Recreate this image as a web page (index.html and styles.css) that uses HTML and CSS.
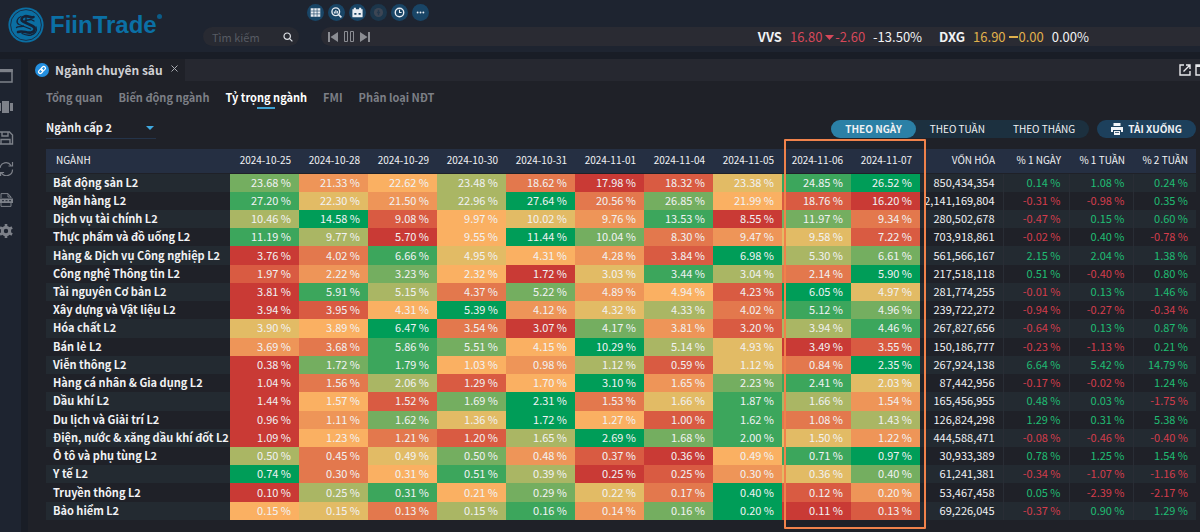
FILE: index.html
```html
<!DOCTYPE html>
<html lang="vi">
<head>
<meta charset="utf-8">
<title>FiinTrade - Ngành chuyên sâu</title>
<link rel="stylesheet" href="styles.css">
</head>
<body>
<header class="topbar">
  <a class="brand" href="#" aria-label="FiinTrade">
    <svg class="brand-mark" viewBox="0 0 36 36" aria-hidden="true">
      <circle cx="18" cy="18" r="17.6" fill="#0b6fa3"/>
      <circle cx="18" cy="18" r="15.4" fill="none" stroke="#17304a" stroke-width="1"/>
      <g fill="none" stroke="#152338" stroke-linecap="round" stroke-linejoin="round">
        <path stroke-width="2.600" d="M25.500 10c-2.500 1.500-5-1.500-8.500-.8-3.500.8-4.500 3.800-2 5.300l9.500 4.500c3.500 2 2.500 5.500-1.500 6.500-4.500 1-8-2.500-13-.5"/>
        <path stroke-width="1.300" d="M13 9.500c-4 1.500-5.500 6-2 8l11.500 4.500M18 10v6M17 13.500l6-1 3 1.500M8.500 20.500c2-2 5 0 7-1.500M28 20c1.500 4-1 7-5 8-4 .8-7-.5-9-1.500"/>
      </g>
    </svg>
    <span class="brand-name">FiinTrade</span><span class="brand-dot"></span>
  </a>
  <form class="search" role="search">
    <input class="search-input" type="text" placeholder="Tìm kiếm" aria-label="Tìm kiếm">
    <button class="bare" type="button" aria-label="Tìm">
      <svg width="10" height="10" viewBox="0 0 10 10" fill="none" stroke="#dde0e5" stroke-width="1.2"><circle cx="4.2" cy="4.2" r="3.2"/><path d="M6.6 6.6 9.4 9.4"/></svg>
    </button>
  </form>
  <div class="top-main">
    <nav class="tools" aria-label="Công cụ">
      <button class="tool" type="button" aria-label="Bảng giá"><svg viewBox="0 0 16 16"><path fill="#e9edf3" d="M3.500 4h9v8h-9z"/><path stroke="#1b4363" stroke-width=".6" d="M3.500 6.600h9M3.500 9.300h9M6.500 4v8M9.500 4v8"/></svg></button>
      <button class="tool" type="button" aria-label="Tìm mã"><svg viewBox="0 0 16 16" fill="none" stroke="#e9edf3"><circle cx="7.300" cy="7.300" r="3.600" stroke-width="1.300"/><path stroke-width="1.500" d="m10 10 2.600 2.600"/><path stroke-width="1" d="M6 9V7M7.400 9V5.600M8.800 9V6.500"/></svg></button>
      <button class="tool" type="button" aria-label="Lịch"><svg viewBox="0 0 16 16"><path fill="#e9edf3" d="M4.500 3.500h2v1.500h3V3.500h2V5h1.300v7.500H3.200V5h1.300z"/><path fill="#1b4363" d="M5 8.500h2v1.500H5zM9 8.500h2v1.500H9z"/></svg></button>
      <button class="tool tool-off" type="button" aria-label="Thông tin"><svg viewBox="0 0 16 16"><circle cx="8" cy="8" r="4.300" fill="#3d4654"/><path stroke="#24384c" stroke-width="1.300" d="M8 5.500v5M6.500 8h3"/></svg></button>
      <button class="tool" type="button" aria-label="Thời gian"><svg viewBox="0 0 16 16" fill="none" stroke="#e9edf3" stroke-width="1.300"><circle cx="8" cy="8" r="4"/><path stroke-width="1" d="M8 5.500V8h2"/></svg></button>
      <button class="tool" type="button" aria-label="Thêm"><svg viewBox="0 0 16 16" fill="#e9edf3"><circle cx="5.300" cy="8" r=".9"/><circle cx="8" cy="8" r=".9"/><circle cx="10.700" cy="8" r=".9"/></svg></button>
    </nav>
    <div class="ticker">
      <div class="player">
        <button class="bare" type="button" aria-label="Trước"><svg width="10" height="10" viewBox="0 0 10 10" fill="#8b8d93"><path d="M0 0h2v10H0zM10 0v10L2.500 5z"/></svg></button>
        <button class="bare" type="button" aria-label="Tạm dừng"><svg width="10" height="11" viewBox="0 0 10 11" fill="none" stroke="#8b8d93"><path d="M.5.5h3v10h-3zM6.500.5h3v10h-3z"/></svg></button>
        <button class="bare" type="button" aria-label="Sau"><svg width="10" height="10" viewBox="0 0 10 10" fill="#8b8d93"><path d="M8 0h2v10H8zM0 0v10l7.500-5z"/></svg></button>
      </div>
      <div class="quotes">
        <div class="quote"><b>VVS</b><span class="q-down">16.80 <svg width="9" height="5" viewBox="0 0 9 5" aria-hidden="true"><path fill="currentColor" d="M0 0h9L4.500 5z"/></svg>-2.60</span><span>-13.50%</span></div>
        <div class="quote"><b>DXG</b><span class="q-flat">16.90 <svg width="9" height="9" viewBox="0 0 9 9" aria-hidden="true"><path fill="currentColor" d="M0 5h9v2H0z"/></svg>0.00</span><span>0.00%</span></div>
      </div>
    </div>
  </div>
</header>
<div class="shell">
  <aside class="sidebar">
    <button class="bare" type="button" aria-label="Cửa sổ"><svg width="14" height="14" viewBox="0 0 14 14"><path fill="none" stroke="#7d8189" stroke-width="1.500" d="M0 1h12v12H0"/><path fill="#7d8189" d="M0 0h12.700v3.200H0z"/></svg></button>
    <button class="bare" type="button" aria-label="Bố cục"><svg width="14" height="14" viewBox="0 0 14 14" fill="#7d8189"><path d="M2 1h7v12H2zM0 3h1v8H0zM10 3h3v8h-3z"/></svg></button>
    <button class="bare" type="button" aria-label="Lưu"><svg width="14" height="14" viewBox="0 0 14 14" fill="none" stroke="#7d8189" stroke-width="1.400"><path d="M0 1h9.500L12.500 4v9H0M2 1v4h6V1M1 13V8.500h9V13"/></svg></button>
    <button class="bare" type="button" aria-label="Làm mới"><svg width="14" height="14" viewBox="0 0 14 14" fill="none" stroke="#7d8189" stroke-width="1.200"><path d="M0 6a6 6 0 0 1 11-2.500M12.500 0v4h-4M12.500 7.500A6 6 0 0 1 1.500 11M.6 14v-3.500h3.500"/></svg></button>
    <button class="bare" type="button" aria-label="Xuất tệp"><svg width="14" height="14" viewBox="0 0 14 14"><path fill="none" stroke="#7d8189" d="M1 5V.6h7L11 4v1M1 10v3.400h10V10M8 .6V4h3"/><path fill="#7d8189" d="M0 5.500h13v4.500H0z"/><path stroke="#1f2530" d="M2 7.700h2M5.500 7.700h2M9 7.700h2"/></svg></button>
    <button class="bare" type="button" aria-label="Cài đặt"><svg width="14" height="14" viewBox="0 0 14 14"><circle cx="6" cy="7" r="3.700" fill="none" stroke="#7d8189" stroke-width="3"/><path stroke="#7d8189" stroke-width="2.600" d="M6 0v3M6 11v3M0 3.500l2.600 1.500M9.400 9l2.700 1.500M0 10.500 2.600 9M9.400 5l2.700-1.500"/></svg></button>
  </aside>
  <main class="workspace">
    <div class="tabbar">
      <div class="tab">
        <svg width="14" height="14" viewBox="0 0 14 14" aria-hidden="true"><circle cx="7" cy="7" r="7" fill="#2490e0"/><g fill="none" stroke="#fff" stroke-width="1.200" transform="rotate(-45 7 7)"><rect x="2.800" y="5.300" width="4.800" height="3.400" rx="1.700"/><rect x="6.400" y="5.300" width="4.800" height="3.400" rx="1.700"/></g></svg>
        <span>Ngành chuyên sâu</span>
        <button class="bare tab-close" type="button" aria-label="Đóng"><svg width="7" height="7" viewBox="0 0 7 7" stroke="#a9acb2"><path d="m.5.5 6 6M6.500.5l-6 6"/></svg></button>
      </div>
      <div class="tabbar-rest">
        <button class="bare" type="button" aria-label="Mở rộng"><svg width="12" height="12" viewBox="0 0 12 12" fill="none" stroke="#e8e9ec" stroke-width="1.400"><path d="M5 1H1v10h10V7M7 1h4v4M11 1 4.500 7.500"/></svg></button>
        <button class="bare clipped" type="button" aria-label="Phóng to"><svg width="12" height="12" viewBox="0 0 12 12" fill="none" stroke="#e8e9ec"><path stroke-width="1.400" d="M1 1h10v10H1z"/><path stroke-width="2" d="M1 2h10"/></svg></button>
      </div>
    </div>
    <nav class="subnav">
      <a href="#">Tổng quan</a>
      <a href="#">Biến động ngành</a>
      <a href="#" class="active" aria-current="page">Tỷ trọng ngành</a>
      <a href="#">FMI</a>
      <a href="#">Phân loại NĐT</a>
    </nav>
    <div class="filters">
      <div class="level">
        <select class="level-select" aria-label="Cấp ngành"><option>Ngành cấp 2</option></select>
      </div>
      <div class="actions">
        <div class="period">
          <button class="pill on" type="button">THEO NGÀY</button>
          <button class="pill" type="button">THEO TUẦN</button>
          <button class="pill" type="button">THEO THÁNG</button>
        </div>
        <button class="download" type="button">
          <svg width="12" height="12" viewBox="0 0 12 12" aria-hidden="true"><path fill="#f2f4f7" d="M2.500 0h7v3h-7zM0 4h12v5h-2V7H2v2H0zM3 8h6v4H3z"/><path stroke="#1e3f5b" stroke-width=".8" d="M4 9.500h4"/></svg>
          TẢI XUỐNG
        </button>
      </div>
    </div>
    <div class="table-area">
      <table class="grid">
        <colgroup>
          <col><col class="c-day" span="10"><col class="c-cap"><col class="c-d1"><col class="c-w1"><col class="c-w2">
        </colgroup>
        <thead><tr id="head"></tr></thead>
        <tbody id="rows"></tbody>
      </table>
      <div class="highlight"></div>
    </div>
  </main>
</div>
<script src="table.js"></script>
</body>
</html>
```
FILE: styles.css
```css
* { box-sizing: border-box; }

body {
  margin: 0;
  height: 100vh;
  min-height: 500px;
  display: flex;
  flex-direction: column;
  gap: 7px;
  overflow-x: hidden;
  background: #191d26;
  color: #f1f2f4;
  font-family: "Noto Sans CJK SC", "Noto Sans", sans-serif;
  font-size: 11px;
  line-height: 16px;
}

button, input, select { font: inherit; color: inherit; }
a { color: inherit; text-decoration: none; }
svg { display: block; flex: none; }

.bare {
  padding: 0;
  border: 0;
  background: none;
  display: flex;
}

.topbar {
  display: flex;
  align-items: flex-end;
  flex: none;
  height: 52px;
  padding: 0 0 6px 8px;
  background: #1e2430;
}

.brand {
  display: flex;
  align-self: flex-start;
  width: 195px;
  padding-top: 7px;
  align-items: center;
  color: #0b70a5;
}
.brand-mark { width: 36px; height: 36px; margin-right: 6px; }
.brand-name {
  font: bold 24px/36px "Liberation Sans", Arial, sans-serif;
}
.brand-dot {
  width: 5px;
  height: 5px;
  border-radius: 50%;
  background: #0b5c88;
  align-self: flex-start;
  margin-top: 7px;
}

.search {
  display: flex;
  align-items: center;
  width: 96px;
  height: 19px;
  padding: 0 6px 0 9px;
  border-radius: 10px;
  background: #282a32;
}
.search-input {
  flex: 1;
  min-width: 0;
  padding: 0;
  border: 0;
  outline: 0;
  background: none;
}
.search-input::placeholder { color: #575b63; opacity: 1; }

.top-main {
  flex: 1;
  display: flex;
  flex-direction: column;
  gap: 6px;
  padding-left: 8px;
}
.tools { display: flex; gap: 4px; }
.tool {
  width: 17px;
  height: 17px;
  padding: 0;
  border: 0;
  border-radius: 50%;
  background: #194566;
}
.tool-off { background: #1c364b; }
.ticker {
  display: flex;
  justify-content: space-between;
  align-items: center;
  height: 19px;
  margin-left: 14px;
  padding: 0 111px 0 7px;
  border-radius: 10px 0 0 10px;
  background: #2a2b33;
}
.player { display: flex; gap: 6px; align-items: center; }
.quotes { display: flex; gap: 17px; font-size: 13px; }
.quote { display: flex; gap: 8px; }
.quote svg { display: inline-block; vertical-align: 2px; margin-right: 1px; }
.q-down { color: #d6485a; }
.q-flat { color: #e0b14c; }

.shell { flex: 1; display: flex; gap: 7px; min-height: 0; }
.sidebar {
  flex: none;
  width: 21px;
  padding-top: 10px;
  display: flex;
  flex-direction: column;
  gap: 17px;
  background: #1e2430;
}

.workspace {
  flex: 1;
  min-width: 0;
  display: flex;
  flex-direction: column;
  background: #1f2128;
}
.tabbar { display: flex; height: 22px; }
.tab {
  display: flex;
  align-items: center;
  gap: 6px;
  width: 157px;
  padding-left: 7px;
  font-size: 12px;
  font-weight: 700;
  color: #cfd0d4;
}
.tab span { flex: none; }
.tab-close { align-self: flex-start; margin: 6px 0 0 2px; }
.tabbar-rest {
  flex: 1;
  display: flex;
  justify-content: flex-end;
  align-items: center;
  gap: 4px;
  overflow: hidden;
  background: #262830;
}
.clipped { width: 5px; overflow: hidden; }

.subnav {
  display: flex;
  gap: 16px;
  padding: 8px 0 0 18px;
  color: #7c7f86;
  font-weight: 700;
}
.subnav a { position: relative; height: 20px; }
.subnav .active { color: #fff; }
.subnav .active::after {
  content: "";
  position: absolute;
  left: 50%;
  bottom: 0;
  width: 18px;
  height: 2px;
  margin-left: -9px;
  background: #3fa0d0;
}

.filters {
  display: flex;
  justify-content: space-between;
  align-items: flex-start;
  height: 31px;
  margin: 9px 4px 0 18px;
}
.level {
  position: relative;
  width: 110px;
  border-bottom: 1px solid #24344a;
}
.level::after {
  content: "";
  position: absolute;
  right: 2px;
  top: 8px;
  border: 4px solid transparent;
  border-top-color: #3fa9e0;
  pointer-events: none;
}
.level-select {
  appearance: none;
  display: block;
  width: 100%;
  height: 20px;
  padding: 0 0 3px;
  border: 0;
  background: none;
  font-weight: 700;
}
.actions { display: flex; gap: 8px; padding-top: 2px; font-size: 10px; }
.period { display: flex; border-radius: 9px; background: #1c303f; }
.pill {
  height: 18px;
  padding: 0 14px;
  border: 0;
  border-radius: 9px;
  background: none;
  line-height: 16px;
}
.pill.on { background: #2b80a6; font-weight: 700; }
.download {
  display: flex;
  align-items: center;
  gap: 5px;
  height: 18px;
  padding: 0 14px;
  border: 0;
  border-radius: 9px;
  background: #1d405c;
  font-weight: 700;
  line-height: 16px;
}

.table-area {
  position: relative;
  flex: 1;
  margin: 0 4px 12px 18px;
}
.grid {
  width: 100%;
  height: 100%;
  table-layout: fixed;
  border-collapse: collapse;
}
.c-day { width: 6%; }
.c-cap { width: 83px; }
.c-d1 { width: 66px; }
.c-w1 { width: 64px; }
.c-w2 { width: 63px; }

.grid th, .grid td { padding: 0 8px 2px; text-align: right; white-space: nowrap; }
.grid thead th {
  height: 24px;
  background: #252f42;
  border-bottom: 1px solid #1f2128;
  font-size: 10px;
  font-weight: 400;
}
.grid thead th:first-child { text-align: left; padding-left: 10px; }
.grid tbody th { text-align: left; padding: 0 0 2px 7px; font-weight: 700; }
.grid tbody tr:nth-child(odd) { background: #232a31; }
.grid .cap { direction: rtl; padding-left: 0; }
.grid .chg { border-left: 1px solid #292d35; }
.up { color: #1fbd73; }
.down { color: #d43d4c; }

.h0 { background: #c93a35; }
.h1 { background: #d95b42; }
.h2 { background: #e3784d; }
.h3 { background: #ee9558; }
.h4 { background: #fab062; }
.h5 { background: #e2bb65; }
.h6 { background: #aab664; }
.h7 { background: #74ae60; }
.h8 { background: #3ca65c; }
.h9 { background: #009d58; }

.highlight {
  position: absolute;
  top: -10px;
  bottom: -9px;
  right: 270px;
  width: 142px;
  border: 2px solid #f0824b;
  border-radius: 1px;
  pointer-events: none;
}
```
FILE: table.js
```javascript
const headings = [
  "NGÀNH", "2024-10-25", "2024-10-28", "2024-10-29", "2024-10-30", "2024-10-31",
  "2024-11-01", "2024-11-04", "2024-11-05", "2024-11-06", "2024-11-07",
  "VỐN HÓA", "% 1 NGÀY", "% 1 TUẦN", "% 2 TUẦN"
];

// name | daily weights | market cap | changes | heat order where rounded weights are equal
const sectors = [
  "Bất động sản L2|23.68 21.33 22.62 23.48 18.62 17.98 18.32 23.38 24.85 26.52|850,434,354|0.14 1.08 0.24",
  "Ngân hàng L2|27.20 22.30 21.50 22.96 27.64 20.56 26.85 21.99 18.76 16.20|2,141,169,804|-0.31 -0.98 0.35",
  "Dịch vụ tài chính L2|10.46 14.58 9.08 9.97 10.02 9.76 13.53 8.55 11.97 9.34|280,502,678|-0.47 0.15 0.60",
  "Thực phẩm và đồ uống L2|11.19 9.77 5.70 9.55 11.44 10.04 8.30 9.47 9.58 7.22|703,918,861|-0.02 0.40 -0.78",
  "Hàng & Dịch vụ Công nghiệp L2|3.76 4.02 6.66 4.95 4.31 4.28 3.84 6.98 5.30 6.61|561,566,167|2.15 2.04 1.38",
  "Công nghệ Thông tin L2|1.97 2.22 3.23 2.32 1.72 3.03 3.44 3.04 2.14 5.90|217,518,118|0.51 -0.40 0.80",
  "Tài nguyên Cơ bản L2|3.81 5.91 5.15 4.37 5.22 4.89 4.94 4.23 6.05 4.97|281,774,255|-0.01 0.13 1.46",
  "Xây dựng và Vật liệu L2|3.94 3.95 4.31 5.39 4.12 4.32 4.33 4.02 5.12 4.96|239,722,272|-0.94 -0.27 -0.34",
  "Hóa chất L2|3.90 3.89 6.47 3.54 3.07 4.17 3.81 3.20 3.94 4.46|267,827,656|-0.64 0.13 0.87",
  "Bán lẻ L2|3.69 3.68 5.86 5.51 4.15 10.29 5.14 4.93 3.49 3.55|150,186,777|-0.23 -1.13 0.21",
  "Viễn thông L2|0.38 1.72 1.79 1.03 0.98 1.12 0.59 1.12 0.84 2.35|267,924,138|6.64 5.42 14.79|0784361529",
  "Hàng cá nhân & Gia dụng L2|1.04 1.56 2.06 1.29 1.70 3.10 1.65 2.23 2.41 2.03|87,442,956|-0.17 -0.02 1.24",
  "Dầu khí L2|1.44 1.57 1.52 1.69 2.31 1.53 1.66 1.87 1.66 1.54|165,456,955|0.48 0.03 -1.75|0417925863",
  "Du lịch và Giải trí L2|0.96 1.11 1.62 1.36 1.72 1.27 1.00 1.62 1.08 1.43|126,824,298|1.29 0.31 5.38",
  "Điện, nước & xăng dầu khí đốt L2|1.09 1.23 1.21 1.20 1.65 2.69 1.68 2.00 1.50 1.22|444,588,471|-0.08 -0.46 -0.40",
  "Ô tô và phụ tùng L2|0.50 0.45 0.49 0.50 0.48 0.37 0.36 0.49 0.71 0.97|30,933,389|0.78 1.25 1.54|6257310489",
  "Y tế L2|0.74 0.30 0.31 0.51 0.39 0.25 0.25 0.30 0.36 0.40|61,241,381|-0.34 -1.07 -1.16",
  "Truyền thông L2|0.10 0.25 0.31 0.21 0.29 0.22 0.17 0.40 0.12 0.20|53,467,458|0.05 -2.39 -2.17",
  "Bảo hiểm L2|0.15 0.15 0.13 0.15 0.16 0.14 0.16 0.20 0.11 0.13|69,226,045|-0.37 0.90 1.29|4526837901"
];

function heatOrder(values) {
  const order = values.map((v, i) => [Number(v), i]).sort((a, b) => a[0] - b[0] || a[1] - b[1]);
  const ranks = [];
  order.forEach(([, column], rank) => { ranks[column] = rank; });
  return ranks;
}

function cell(tag, text, className) {
  const el = document.createElement(tag);
  el.textContent = text;
  if (className) el.className = className;
  return el;
}

const head = document.getElementById("head");
headings.forEach((text) => {
  const th = cell("th", text);
  th.scope = "col";
  head.append(th);
});

const body = document.getElementById("rows");
sectors.forEach((line) => {
  const [name, weights, cap, changes, fixedOrder] = line.split("|");
  const values = weights.split(" ");
  const ranks = fixedOrder ? [...fixedOrder] : heatOrder(values);
  const row = document.createElement("tr");
  const label = cell("th", name);
  label.scope = "row";
  row.append(label);
  values.forEach((v, i) => row.append(cell("td", v + " %", "h" + ranks[i])));
  row.append(cell("td", cap, "cap"));
  changes.split(" ").forEach((v) => row.append(cell("td", v + " %", v < 0 ? "chg down" : "chg up")));
  body.append(row);
});
```
